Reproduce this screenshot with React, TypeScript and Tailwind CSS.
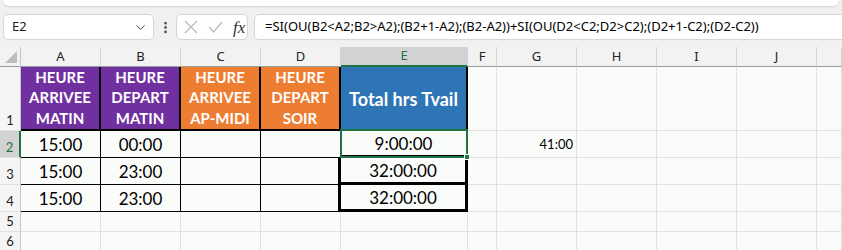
import { ChevronDown, EllipsisVertical } from 'lucide-react';

const cols = ['A', 'B', 'C', 'D', 'E', 'F', 'G', 'H', 'I', 'J', ''];

const gray = 'border-[#e1e1e1]';

function RowHead({ n, selected }: { n: string; selected?: boolean }) {
  return (
    <div
      className={`flex items-end justify-center pb-[3px] text-[13px] leading-none border-b border-[#e1e1e1] ${
        selected
          ? 'bg-[#d2d2d2] text-[#217346] border-r-2 border-r-[#217346]'
          : 'bg-[#f5f5f5] text-[#222] border-r border-r-[#c6c6c6]'
      }`}
    >
      {n}
    </div>
  );
}

function HeadCell({ bg, lines }: { bg: string; lines: string[] }) {
  return (
    <div
      className={`${bg} flex flex-col items-center justify-end pb-[1px] border-r-2 border-b-2 border-black text-white font-bold text-[15px] leading-[20.5px]`}
    >
      {lines.map((l) => (
        <span key={l}>{l}</span>
      ))}
    </div>
  );
}

function Data({ v, cls }: { v?: string; cls?: string }) {
  return (
    <div className={`flex items-center justify-center pt-[1px] text-[17px] text-black ${cls ?? 'border-r border-b border-black'}`}>
      {v}
    </div>
  );
}

function Empty({ n }: { n: number }) {
  return (
    <>
      {[...Array(n)].map((_, i) => (
        <div key={i} className={`border-r border-b ${gray}`} />
      ))}
    </>
  );
}

export default function App() {
  return (
    <div className="w-[842px] h-[250px] overflow-hidden bg-[#f0f0f0] font-['Noto_Sans',sans-serif]">
      {/* barre du haut */}
      <div className="h-[6px] mx-[3px] bg-white rounded-b-md shadow-[0_1px_2px_rgba(0,0,0,0.12)]" />

      {/* zone nom + formule */}
      <div className="flex items-center h-[26px] mt-[8px] mb-[7px] pl-[3px]">
        <div className="w-[151px] h-full flex items-center justify-between pl-[8px] pr-[5px] bg-white border border-[#d6d6d6] rounded-[5px] text-[13px] text-[#1a1a1a]">
          <span>E2</span>
          <ChevronDown size={15} strokeWidth={1.6} className="text-[#444]" />
        </div>
        <div className="w-[22px] flex justify-center">
          <EllipsisVertical size={15} strokeWidth={2.5} className="text-[#555]" />
        </div>
        <div className="w-[72px] h-full flex items-center gap-[10px] pl-[7px] bg-white border border-[#d6d6d6] rounded-[5px]">
          <svg width="14" height="14" viewBox="0 0 14 14">
            <path d="M1 1 L13 13 M13 1 L1 13" stroke="#b8b8b8" strokeWidth="1.2" />
          </svg>
          <svg width="15" height="12" viewBox="0 0 15 12">
            <path d="M1 6 L5.5 11 L14 1" stroke="#b8b8b8" strokeWidth="1.2" fill="none" />
          </svg>
          <span className="font-['Liberation_Serif',serif] italic text-[17px] leading-none text-[#333]">fx</span>
        </div>
        <div className="flex-1 h-full ml-[6px] -mr-[4px] flex items-center pl-[10px] bg-white border border-[#d6d6d6] rounded-l-[5px] text-[13px] text-black whitespace-nowrap">
          =SI(OU(B2&lt;A2;B2&gt;A2);(B2+1-A2);(B2-A2))+SI(OU(D2&lt;C2;D2&gt;C2);(D2+1-C2);(D2-C2))
        </div>
      </div>

      {/* feuille */}
      <div className="grid grid-cols-[21px_80px_80px_80px_80px_127px_29px_80px_80px_80px_80px_1fr] grid-rows-[20px_64px_27px_27px_27px_20px_20px] bg-[#fafcfa] font-['Lato',sans-serif]">
        {/* en-têtes de colonnes */}
        <div className="relative bg-[#f3f2f3] border-r border-r-[#c6c6c6] border-b border-b-[#9c9c9c]">
          <div className="absolute right-[3px] bottom-[3px] w-0 h-0 border-l-[12px] border-l-transparent border-b-[12px] border-b-[#bdbdbd]" />
        </div>
        {cols.map((c) => (
          <div
            key={c || 'k'}
            className={`flex items-center justify-center text-[13px] font-['Noto_Sans',sans-serif] border-r border-r-[#d4d4d4] ${
              c === 'E'
                ? 'bg-[#d2d2d2] text-[#217346] border-b-2 border-b-[#217346]'
                : 'bg-[#f3f2f3] text-[#222] border-b border-b-[#9c9c9c]'
            }`}
          >
            {c}
          </div>
        ))}

        {/* ligne 1 */}
        <RowHead n="1" />
        <HeadCell bg="bg-[#7030a0]" lines={['HEURE', 'ARRIVEE', 'MATIN']} />
        <HeadCell bg="bg-[#7030a0]" lines={['HEURE', 'DEPART', 'MATIN']} />
        <HeadCell bg="bg-[#ed7d31]" lines={['HEURE', 'ARRIVEE', 'AP-MIDI']} />
        <HeadCell bg="bg-[#ed7d31]" lines={['HEURE', 'DEPART', 'SOIR']} />
        <div className="bg-[#2e75b6] flex items-center justify-center pt-[3px] border-r-2 border-b-2 border-black text-white font-bold text-[18px]">
          Total hrs Tvail
        </div>
        <Empty n={6} />

        {/* ligne 2 */}
        <RowHead n="2" selected />
        <Data v="15:00" />
        <Data v="00:00" />
        <Data />
        <Data cls="border-b border-black" />
        <div className="relative flex items-center justify-center pt-[1px] text-[17px] border-r-2 border-r-[#e1e1e1] border-b-[3px] border-b-black">
          9:00:00
          <div className="absolute -left-[1px] -top-[2px] -right-[2px] -bottom-[3px] border-2 border-[#217346]" />
          <div className="absolute -right-[4px] -bottom-[5px] w-[6px] h-[6px] bg-[#217346] border border-white" />
        </div>
        <div className={`border-r border-b ${gray}`} />
        <div className={`flex items-center justify-end pr-[3px] pt-[2px] text-[13px] text-black border-r border-b ${gray}`}>41:00</div>
        <Empty n={4} />

        {/* lignes 3-4 */}
        {['3', '4'].map((r) => (
          <div key={r} className="contents">
            <RowHead n={r} />
            <Data v="15:00" />
            <Data v="23:00" />
            <Data />
            <Data cls="border-r-[3px] border-b border-black" />
            <Data v="32:00:00" cls="border-r-[3px] border-b-[3px] border-black" />
            <Empty n={6} />
          </div>
        ))}

        {/* lignes 5-6 */}
        {['5', '6'].map((r) => (
          <div key={r} className="contents">
            <RowHead n={r} />
            <Empty n={11} />
          </div>
        ))}
      </div>
    </div>
  );
}
